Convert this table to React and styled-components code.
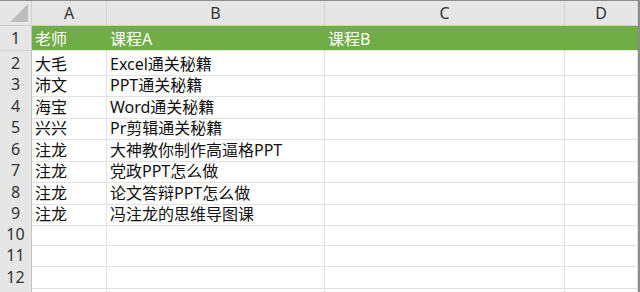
import React from 'react'
import styled, {createGlobalStyle} from 'styled-components'

const columns = ['A', 'B', 'C', 'D']

const rows = [
  {head: true, cells: ['老师', '课程A', '课程B', '']},
  {cells: ['大毛', 'Excel通关秘籍', '', '']},
  {cells: ['沛文', 'PPT通关秘籍', '', '']},
  {cells: ['海宝', 'Word通关秘籍', '', '']},
  {cells: ['兴兴', 'Pr剪辑通关秘籍', '', '']},
  {cells: ['注龙', '大神教你制作高逼格PPT', '', '']},
  {cells: ['注龙', '党政PPT怎么做', '', '']},
  {cells: ['注龙', '论文答辩PPT怎么做', '', '']},
  {cells: ['注龙', '冯注龙的思维导图课', '', '']},
  {cells: ['', '', '', '']},
  {cells: ['', '', '', '']},
  {cells: ['', '', '', '']},
]

const GlobalStyle = createGlobalStyle`
  html, body {
    margin: 0;
    padding: 0;
    background: #ffffff;
    overflow: hidden;
  }
  body {
    font-family: "Noto Sans", "Noto Sans CJK SC", sans-serif;
  }
`

const GRID = '32px 75px 218px 240px 1fr'

const Sheet = styled.div`
  width: 640px;
  height: 292px;
  box-sizing: border-box;
  border-top: 1px solid #8c8c8c;
  border-right: 2px solid #8c8c8c;
  overflow: hidden;
`

const HeaderRow = styled.div`
  display: grid;
  grid-template-columns: ${GRID};
  height: 25px;
  background: #e6e6e6;
  border-bottom: 1px solid #cfcfcf;
  box-sizing: border-box;
`

const Corner = styled.div`
  position: relative;
  border-right: 1px solid #cfcfcf;
  svg {
    position: absolute;
    right: 3px;
    bottom: 3px;
  }
`

const ColLabel = styled.div`
  display: flex;
  align-items: flex-end;
  justify-content: center;
  padding-bottom: 2px;
  font-size: 16px;
  color: #333;
  border-right: 1px solid #d6d6d6;
  line-height: 20px;
`

const Row = styled.div`
  display: grid;
  grid-template-columns: ${GRID};
  height: ${p => p.$h}px;
  background: ${p => (p.$green ? '#70ad47' : '#ffffff')};
`

const RowLabel = styled.div`
  display: flex;
  align-items: center;
  justify-content: center;
  background: #e6e6e6;
  border-right: 1px solid #c4c4c4;
  border-bottom: 1px solid #d2d2d2;
  font-size: 16px;
  color: #333;
`

const Cell = styled.div`
  display: flex;
  align-items: center;
  padding-left: 3px;
  font-size: 16px;
  white-space: nowrap;
  color: ${p => (p.$green ? '#ffffff' : '#111111')};
  border-right: 1px solid ${p => (p.$green ? '#70ad47' : '#e2e2e2')};
  border-bottom: 1px solid ${p => (p.$green ? '#e2f0d9' : '#e2e2e2')};
`

const heights = [25, 21, 22, 21, 22, 21, 22, 21, 22, 21, 22, 22]

export default function App() {
  return (
    <>
      <GlobalStyle />
      <Sheet>
        <HeaderRow>
          <Corner>
            <svg width="18" height="18" viewBox="0 0 18 18">
              <polygon points="18,0 18,18 0,18" fill="#bdbdbd" />
            </svg>
          </Corner>
          {columns.map(c => (
            <ColLabel key={c}>{c}</ColLabel>
          ))}
        </HeaderRow>
        {rows.map((row, i) => (
          <Row key={i} $h={heights[i]} $green={row.head}>
            <RowLabel>{i + 1}</RowLabel>
            {row.cells.map((text, j) => (
              <Cell key={j} $green={row.head}>{text}</Cell>
            ))}
          </Row>
        ))}
        <Row $h={21}>
          <RowLabel />
          {columns.map(c => (
            <Cell key={c} />
          ))}
        </Row>
      </Sheet>
    </>
  )
}
